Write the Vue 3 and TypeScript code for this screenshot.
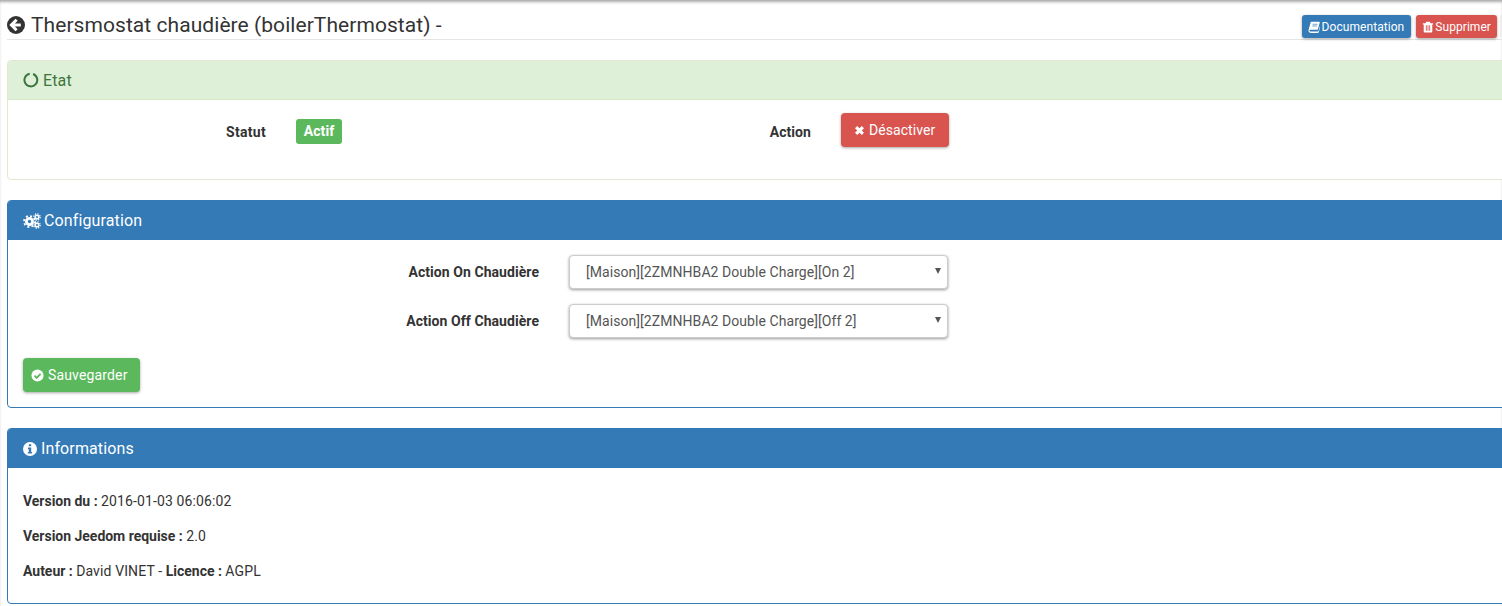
<script setup lang="ts">
const infoRows = [
  [{ b: 'Version du : ', t: '2016-01-03 06:06:02' }],
  [{ b: 'Version Jeedom requise : ', t: '2.0' }],
  [{ b: 'Auteur : ', t: 'David VINET - ' }, { b: 'Licence : ', t: 'AGPL' }],
]
const selects = [
  { label: 'Action On Chaudière', value: '[Maison][2ZMNHBA2 Double Charge][On 2]' },
  { label: 'Action Off Chaudière', value: '[Maison][2ZMNHBA2 Double Charge][Off 2]' },
]
</script>

<template>
  <div class="page">
    <header class="title-row">
      <h1 class="title">
        <svg class="back" viewBox="0 0 18 18" aria-hidden="true">
          <circle cx="9" cy="9" r="9" fill="#333" />
          <path d="M9.600 3.800 4.400 9l5.200 5.200M4.800 9h9" fill="none" stroke="#fff" stroke-width="3" />
        </svg>
        <span>Thersmostat chaudière (boilerThermostat) -</span>
      </h1>
      <div class="top-actions">
        <a class="btn btn-xs blue doc">
          <svg class="ico-sm" viewBox="0 0 14 14" aria-hidden="true">
            <path d="M3.600 1h9.400c.6 0 .9.5.7 1.100L11.500 9.500c-.2.6-.6.8-1.200.8H3c-.8 0-1.300.5-1.300 1 0 .6.5 1 1.200 1h8.300l.5-.1c.3 0 .4-.2.5-.5l2-6.500.3.900-2 7c-.2.500-.6.900-1.200.9H2.800C1.500 13.500.5 12.500.5 11.200c0-.4 0-.7.2-1L3 2c.1-.6.300-1 .6-1z" fill="#fff" />
            <path d="M5.500 3.800h5.600M4.900 5.800h5.600" stroke="#337ab7" stroke-width=".8" fill="none" />
          </svg>
          Documentation
        </a>
        <a class="btn btn-xs red del">
          <svg class="ico-sm" viewBox="0 0 14 14" aria-hidden="true">
            <path fill-rule="evenodd" d="M5 .8h4l1 1.700h3v1.500h-1v8.500c0 .5-.4 1-1 1H3c-.6 0-1-.5-1-1V4H1V2.500h3L5 .8zM4.500 5v6.500h1V5h-1zm2 0v6.500h1V5h-1zm2 0v6.500h1V5h-1z" fill="#fff" />
          </svg>
          Supprimer
        </a>
        <span class="btn-stub"></span>
      </div>
    </header>

    <section class="panel panel-success">
      <div class="panel-heading">
        <svg class="ico" viewBox="0 0 16 16" aria-hidden="true">
          <path d="M6.700 1.700a6.400 6.400 0 1 0 3.400.3" fill="none" stroke="#3c763d" stroke-width="2" />
        </svg>
        Etat
      </div>
      <div class="panel-body status-body">
        <div class="status-grid">
          <span class="label wide">Statut</span>
          <span class="value"><span class="badge">Actif</span></span>
          <span class="label">Action</span>
          <span class="value">
            <a class="btn red big">
              <svg class="ico-btn" viewBox="0 0 12 12" aria-hidden="true">
                <path d="M2.300 2.300l7.400 7.400m0-7.400l-7.400 7.400" stroke="#fff" stroke-width="3.400" fill="none" />
              </svg>
              Désactiver
            </a>
          </span>
        </div>
      </div>
    </section>

    <section class="panel panel-primary">
      <div class="panel-heading">
        <svg class="ico gears" viewBox="0 0 18 16" aria-hidden="true">
          <circle cx="6.500" cy="8.500" r="3.100" fill="none" stroke="#fff" stroke-width="2.800" />
          <circle cx="6.500" cy="8.500" r="5.500" fill="none" stroke="#fff" stroke-width="1.800" stroke-dasharray="2 2.320" />
          <circle cx="14" cy="4" r="1.800" fill="none" stroke="#fff" stroke-width="1.500" />
          <circle cx="14" cy="4" r="3.200" fill="none" stroke="#fff" stroke-width="1.200" stroke-dasharray="1.300 1.210" />
          <circle cx="14" cy="12" r="1.800" fill="none" stroke="#fff" stroke-width="1.500" />
          <circle cx="14" cy="12" r="3.200" fill="none" stroke="#fff" stroke-width="1.200" stroke-dasharray="1.300 1.210" />
        </svg>
        Configuration
      </div>
      <div class="panel-body config-body">
        <div v-for="s in selects" :key="s.label" class="form-row">
          <label class="label">{{ s.label }}</label>
          <div class="select">
            <span>{{ s.value }}</span>
            <i class="caret"></i>
          </div>
        </div>
        <a class="btn green big save">
          <svg class="ico-btn" viewBox="0 0 14 14" aria-hidden="true">
            <circle cx="7" cy="7" r="6.500" fill="#fff" />
            <path d="M3.800 7.200l2.300 2.300 4.200-4.300" fill="none" stroke="#5cb85c" stroke-width="2" />
          </svg>
          Sauvegarder
        </a>
      </div>
    </section>

    <section class="panel panel-primary last">
      <div class="panel-heading">
        <svg class="ico info" viewBox="0 0 14 14" aria-hidden="true">
          <circle cx="7" cy="7" r="7" fill="#fff" />
          <path d="M5.800 2.300h2.400v2H5.800zM5 5.600h3.200v4.300h.9v1.700H4.900V9.900h.9V7.300H5z" fill="#337ab7" />
        </svg>
        Informations
      </div>
      <div class="panel-body info-body">
        <p v-for="(row, i) in infoRows" :key="i" class="info-row">
          <template v-for="part in row" :key="part.b"><b>{{ part.b }}</b>{{ part.t }}</template>
        </p>
      </div>
    </section>
  </div>
</template>

<style>
html, body { margin: 0; background: #fff; overflow: hidden; }
</style>

<style scoped>
.page {
  position: relative;
  width: 1502px;
  height: 606px;
  overflow: hidden;
  box-sizing: border-box;
  padding: 0 0 0 7px;
  font-family: Roboto, "Liberation Sans", sans-serif;
  font-size: 14px;
  color: #333;
  box-shadow: inset 0 3px 3px -1px #aaa;
  letter-spacing: 0.06px;
}
.title-row {
  display: flex;
  align-items: flex-start;
  justify-content: space-between;
  height: 39px;
  border-bottom: 1px solid #e5e5e5;
  margin-bottom: 20px;
  width: 1495px;
}
.title {
  display: flex;
  align-items: center;
  gap: 6px;
  margin: 13px 0 0;
  font-size: 21px;
  font-weight: 400;
  line-height: 24px;
  color: #333;
  letter-spacing: 0.06px;
}
.back { width: 18px; height: 18px; flex: none; }
.top-actions {
  display: flex;
  gap: 5px;
  margin-top: 15px;
  flex: none;
}
.btn {
  display: inline-flex;
  align-items: center;
  box-sizing: border-box;
  color: #fff;
  border-radius: 3px;
  box-shadow: 0 1px 3px rgba(0, 0, 0, 0.35);
}
.btn-xs {
  height: 23px;
  font-size: 12px;
  padding: 1px 6px 0;
  gap: 2px;
}
.doc { padding-right: 7px; }
.del { gap: 1px; }
.btn-stub {
  width: 2px;
  height: 22px;
  background: #eee;
  margin-left: -2px;
}
.blue { background: #337ab7; }
.red { background: #d9534f; }
.green { background: #5cb85c; }
.ico-sm { width: 12px; height: 12px; flex: none; }
.panel {
  width: 1510px;
  box-sizing: border-box;
  border: 1px solid;
  border-radius: 4px;
  margin-bottom: 20px;
  background: #fff;
}
.panel-success { border-color: #e3e8d0; }
.panel-primary { border-color: #337ab7; }
.panel-heading {
  display: flex;
  align-items: center;
  gap: 4px;
  height: 39px;
  box-sizing: border-box;
  padding: 0 15px;
  font-size: 16px;
  letter-spacing: 0.12px;
  border-radius: 3px 3px 0 0;
}
.panel-success .panel-heading {
  background: #dff0d8;
  color: #3c763d;
  border-bottom: 1px solid #d6e9c6;
}
.panel-primary .panel-heading {
  background: #337ab7;
  color: #fff;
}
.ico { width: 16px; height: 16px; flex: none; }
.ico.gears { width: 18px; height: 16px; margin-right: -1px; }
.ico.info { width: 14px; height: 14px; }
.status-body { height: 79px; box-sizing: border-box; padding: 13px 15px 0; }
.status-grid {
  display: grid;
  grid-template-columns: 243px 242px 243px auto;
  column-gap: 30px;
  justify-content: start;
  align-items: start;
}
.label {
  font-weight: 700;
  text-align: right;
  line-height: 20px;
  padding-top: 9px;
}
.label.wide { letter-spacing: 0.3px; }
.value { display: block; }
.badge {
  display: inline-block;
  box-sizing: border-box;
  width: 46px;
  height: 25px;
  margin-top: 6px;
  background: #5cb85c;
  color: #fff;
  font-weight: 700;
  text-align: center;
  line-height: 25px;
  border-radius: 3px;
}
.big {
  height: 34px;
  padding: 0 14px 0 13px;
  gap: 4px;
  border-radius: 4px;
  font-size: 14px;
}
.ico-btn { width: 11px; height: 11px; flex: none; }
.config-body { height: 167px; box-sizing: border-box; padding: 15px 15px 0; }
.form-row {
  display: grid;
  grid-template-columns: 516px 379px;
  column-gap: 30px;
  margin-bottom: 15px;
  align-items: start;
}
.form-row .label { padding-top: 7px; }
.select {
  position: relative;
  height: 34px;
  box-sizing: border-box;
  padding: 0 16px;
  border: 1px solid #ccc;
  border-radius: 4px;
  background: #fff;
  color: #555;
  line-height: 32px;
  box-shadow: 0 1px 3px rgba(0, 0, 0, 0.4);
}
.caret {
  position: absolute;
  right: 6px;
  top: 12px;
  width: 0;
  height: 0;
  border-left: 3px solid transparent;
  border-right: 3px solid transparent;
  border-top: 6px solid #555;
}
.save { margin-top: 5px; padding: 0 12px 0 8px; gap: 4px; letter-spacing: 0.15px; }
.save .ico-btn { width: 13px; height: 13px; }
.info-body { padding: 23px 15px 0; height: 135px; box-sizing: border-box; }
.info-row { margin: 0 0 15px; line-height: 20px; letter-spacing: 0.12px; }
.info-row b { font-weight: 700; letter-spacing: -0.02px; }
.last { margin-bottom: 0; }
</style>
